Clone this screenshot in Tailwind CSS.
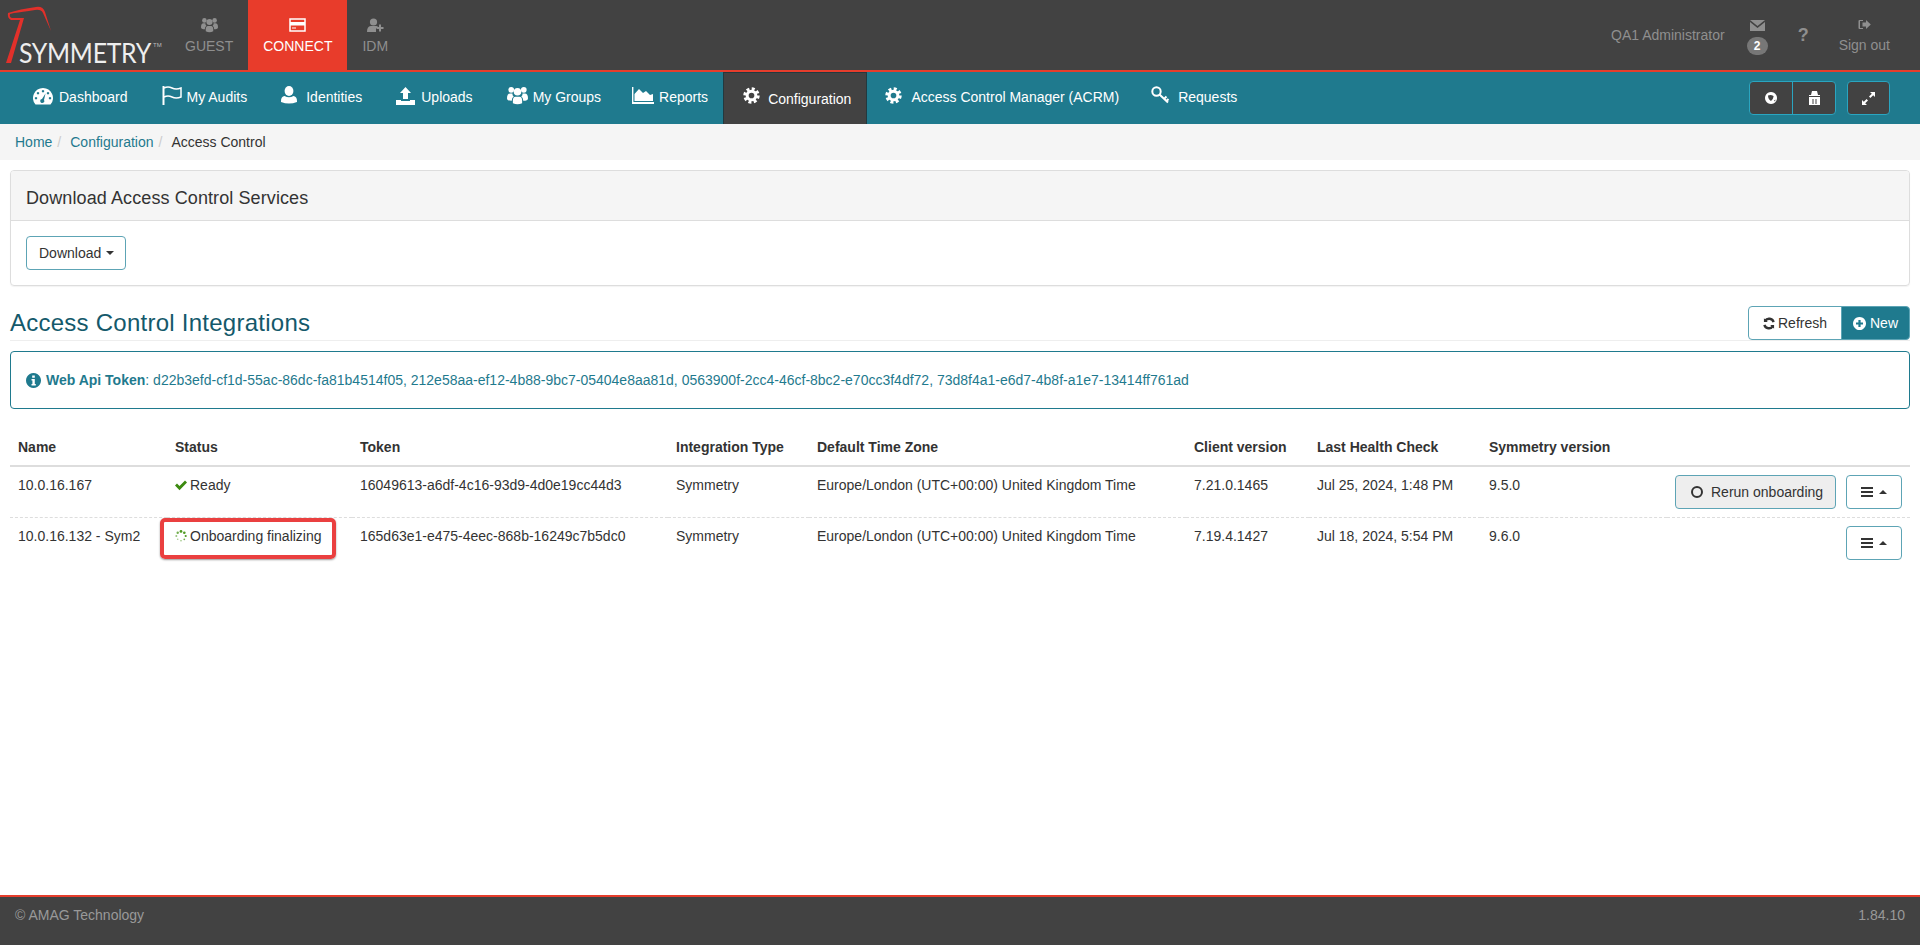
<!DOCTYPE html>
<html lang="en">
<head>
    <meta charset="UTF-8">
    <title>Access Control</title>
    <script src="https://cdn.jsdelivr.net/npm/@tailwindcss/browser@4"></script>
</head>
<body class="bg-white text-[#333] text-[14px] leading-[20px] font-['Liberation_Sans',Arial,sans-serif] h-screen overflow-hidden flex flex-col relative">

    <!-- shared icons -->
    <svg class="hidden">
        <symbol id="i-group" viewBox="0 0 20 18">
            <circle cx="4" cy="3.6" r="2.7"/><circle cx="16" cy="3.6" r="2.7"/><circle cx="10" cy="5.4" r="3.6"/>
            <path d="M0 11.5 Q0 7 3 7 L5.2 7 Q5 9 6.4 10 Q4.6 11 4.6 13.5 L4.6 14 Q0 14 0 11.5Z"/>
            <path d="M20 11.5 Q20 7 17 7 L14.8 7 Q15 9 13.6 10 Q15.4 11 15.4 13.5 L15.4 14 Q20 14 20 11.5Z"/>
            <path d="M5.6 14 Q5.6 10.4 8 10.2 L12 10.2 Q14.4 10.4 14.4 14 L14.4 16.4 Q10 18.4 5.6 16.4Z"/>
        </symbol>
        <symbol id="i-gear" viewBox="0 0 18 18">
            <circle cx="9" cy="9" r="4.6" fill="none" stroke="currentColor" stroke-width="3.2"/>
            <circle cx="9" cy="9" r="7" fill="none" stroke="currentColor" stroke-width="3.4" stroke-dasharray="3.1 2.4"/>
        </symbol>
        <symbol id="i-bars" viewBox="0 0 12 10">
            <rect y="0" width="12" height="2"/><rect y="4" width="12" height="2"/><rect y="8" width="12" height="2"/>
        </symbol>
    </svg>

    <!-- Top bar -->
    <header class="h-[72px] shrink-0 bg-[#424242] border-b-2 border-[#e53d2c] flex justify-between">
        <div class="flex">
            <a class="w-[170px] h-[70px] relative block">
                <svg class="absolute left-0 top-0" width="60" height="70" viewBox="0 0 60 70" fill="#e2302a">
                    <path d="M8 13 Q20 9 36 7 Q43 6 45 12 L51 31 L43 13 Q41 9 35 10 Q22 12 14 13 L10 14 Q9 17 12 18 L24 18 L11 63 L6 63 L20 20 L11 20 Q7 18 8 13Z"/>
                </svg>
                <span class="absolute left-[19px] top-[40px] text-[27px] leading-[26px] origin-left scale-x-[0.92] tracking-[-0.3px] text-[#eeeeee] font-['Lato',sans-serif]">SYMMETRY</span>
                <span class="absolute left-[153px] top-[41px] text-[6px] leading-[8px] text-[#bbb]">TM</span>
            </a>
            <a class="px-[15px] h-[70px] flex flex-col items-center pt-[17px] text-[#8f8f8f]">
                <svg width="17" height="16" fill="currentColor"><use href="#i-group"/></svg>
                <span class="mt-[3px]">GUEST</span>
            </a>
            <a class="px-[15px] h-[70px] flex flex-col items-center pt-[17px] bg-[#e83c2b] text-white">
                <svg width="17" height="16" viewBox="0 0 17 16" fill="none" stroke="currentColor">
                    <rect x="1" y="2" width="15" height="12" stroke-width="1.5"/>
                    <rect x="1" y="5" width="15" height="3.5" fill="currentColor" stroke="none"/>
                    <rect x="3" y="10.5" width="4" height="1" fill="currentColor" stroke="none"/>
                </svg>
                <span class="mt-[3px]">CONNECT</span>
            </a>
            <a class="px-[15px] h-[70px] flex flex-col items-center pt-[17px] text-[#8f8f8f]">
                <svg width="17" height="16" viewBox="0 0 17 16" fill="currentColor">
                    <circle cx="6.5" cy="5" r="3.6"/>
                    <path d="M0 15 Q0 9.5 3.6 9 L9.5 9 Q11.5 9.6 12 11 L9 11 L9 15Z"/>
                    <path d="M12 7.5 H14 V10 H16.5 V12 H14 V14.5 H12 V12 H9.5 V10 H12Z"/>
                </svg>
                <span class="mt-[3px]">IDM</span>
            </a>
        </div>
        <div class="flex items-start text-[#8f8f8f] pr-[30px]">
            <span class="mt-[25px]">QA1 Administrator</span>
            <div class="ml-[22px] mt-[20px] w-[21px] flex flex-col items-center">
                <svg width="15" height="11" viewBox="0 0 15 11" fill="currentColor">
                    <path d="M0 0 H15 L7.5 6Z"/><path d="M0 2 L7.5 8 L15 2 V11 H0Z"/>
                </svg>
                <span class="mt-[6px] w-[21px] h-[18px] rounded-full bg-[#777] text-white text-[12px] leading-[18px] font-bold text-center">2</span>
            </div>
            <span class="ml-[30px] mt-[25px] w-[11px] text-[18px] leading-[20px] font-bold text-center">?</span>
            <div class="ml-[30px] mt-[19px] flex flex-col items-center">
                <svg width="13" height="11" viewBox="0 0 13 11" fill="currentColor">
                    <path d="M5 1 H1.5 Q0.5 1 0.5 2 V9 Q0.5 10 1.5 10 H5 V9 H2 V2 H5Z"/>
                    <path d="M4.5 3.6 H8 V1 L12.8 5.5 L8 10 V7.4 H4.5Z"/>
                </svg>
                <span class="mt-[5px]">Sign out</span>
            </div>
        </div>
    </header>

    <!-- Main nav -->
    <nav class="h-[52px] shrink-0 bg-[#1f7a8e] text-white flex justify-between pl-[14px] pr-[30px]">
        <div class="flex">
            <a class="flex items-center pl-[19px] pr-[15px] pb-[2px]">
                <span class="w-[26px] -mt-[2px]"><svg class="block" width="20" height="17" viewBox="0 0 20 17" fill="currentColor">
                    <path fill-rule="evenodd" d="M10 0 A10 10 0 0 1 17.5 16.5 H2.5 A10 10 0 0 1 10 0Z M10 2 a1.2 1.2 0 1 0 .01 0Z M5 4 a1.2 1.2 0 1 0 .01 0Z M15 4 a1.2 1.2 0 1 0 .01 0Z M3 9 a1.2 1.2 0 1 0 .01 0Z M17 9 a1.2 1.2 0 1 0 .01 0Z M12.5 5.5 L9 11 a2 2 0 1 0 2 1Z"/>
                </svg></span>Dashboard</a>
            <a class="flex items-center pl-[19px] pr-[15px] pb-[2px]">
                <span class="w-[25px] -mt-[3px]"><svg class="block" width="20" height="19" viewBox="0 0 20 19" fill="none" stroke="currentColor" stroke-width="1.5">
                    <path d="M1.5 0 V19" stroke-width="2"/><path d="M2 2 Q6 0 10 2 T19 2 V11 Q14 13 10 11 T2 11"/>
                </svg></span>My Audits</a>
            <a class="flex items-center pl-[19px] pr-[15px] pb-[2px]">
                <span class="w-[25px] -mt-[4px]"><svg class="block" width="16" height="18" viewBox="0 0 16 18" fill="currentColor">
                    <ellipse cx="8" cy="5" rx="4.4" ry="5"/><path d="M0 15 Q0 10.5 3.6 10 Q8 12.4 12.4 10 Q16 10.5 16 15 V16 Q8 19 0 16Z"/>
                </svg></span>Identities</a>
            <a class="flex items-center pl-[19px] pr-[15px] pb-[2px]">
                <span class="w-[25px] -mt-[3px]"><svg class="block" width="19" height="18" viewBox="0 0 19 18" fill="currentColor">
                    <path d="M9.5 0 L15 6 H12 V12 H7 V6 H4Z"/><path d="M0 13 H5 V14 H14 V13 H19 V18 H0Z"/>
                </svg></span>Uploads</a>
            <a class="flex items-center pl-[19px] pr-[15px] pb-[2px]">
                <span class="w-[26px] -mt-[3px]"><svg class="block" width="21" height="19" fill="currentColor"><use href="#i-group"/></svg></span>My Groups</a>
            <a class="flex items-center pl-[16px] pr-[15px] pb-[2px]">
                <span class="w-[27px] -mt-[3px]"><svg class="block" width="22" height="17" viewBox="0 0 22 17" fill="currentColor">
                    <path d="M0 0 H1.4 V15 H22 V17 H0Z"/><path d="M2.5 14 V7 L7 2 L11 6 L14 4 L18 8 L21 7 V14Z"/>
                </svg></span>Reports</a>
            <a class="flex items-center pl-[19px] pr-[15px] bg-[#424242] border-x border-t border-[#22393f]">
                <span class="w-[25px] -mt-[6px]"><svg class="block" width="17" height="17" color="#fff"><use href="#i-gear"/></svg></span>Configuration</a>
            <a class="flex items-center pl-[18px] pr-[15px] pb-[2px]">
                <span class="w-[26px] -mt-[3px]"><svg class="block" width="17" height="17"><use href="#i-gear"/></svg></span>Access Control Manager (ACRM)</a>
            <a class="flex items-center pl-[17px] pr-[15px] pb-[2px]">
                <span class="w-[27px] -mt-[4px]"><svg class="block" width="19" height="19" viewBox="0 0 19 19" fill="none" stroke="currentColor" stroke-width="2">
                    <circle cx="5.5" cy="5.5" r="4.2"/><path d="M8.5 8.5 L17 16.5 M13 13 L15.5 10.5 M15.5 15 L17.5 13"/>
                </svg></span>Requests</a>
        </div>
        <div class="flex items-center gap-[11px]">
            <div class="flex h-[34px] bg-[#424242] border border-[#2aa5c0] rounded-[4px] divide-x divide-[#2aa5c0]">
                <span class="w-[43px] flex items-center justify-center">
                    <svg width="12" height="12" viewBox="0 0 12 12" fill="currentColor"><path fill-rule="evenodd" d="M6 0 a6 6 0 1 0 .01 0Z M9 8.5 L10.5 7.5 L10 9.5Z M3 3.5 Q6 2.5 8.5 4 Q9 6 6 9 Q3 7 3 3.5Z"/></svg>
                </span>
                <span class="w-[42px] flex items-center justify-center">
                    <svg width="11" height="14" viewBox="0 0 11 14" fill="currentColor"><path fill-rule="evenodd" d="M3 0 H8 L9 4 H11 V5 H0 V4 H2Z M0 6 H11 V14 H0Z M3.5 8 H4.5 V13 H3.5Z M6.5 8 H7.5 V13 H6.5Z"/></svg>
                </span>
            </div>
            <span class="w-[43px] h-[34px] bg-[#424242] border border-[#2aa5c0] rounded-[4px] flex items-center justify-center">
                <svg width="13" height="13" viewBox="0 0 13 13" fill="currentColor"><path d="M8 0 H13 V5 L11.2 3.2 L8.4 6 L7 4.6 L9.8 1.8Z"/><path d="M5 13 H0 V8 L1.8 9.8 L4.6 7 L6 8.4 L3.2 11.2Z"/></svg>
            </span>
        </div>
    </nav>

    <!-- Breadcrumb -->
    <div class="h-[36px] shrink-0 bg-[#f5f5f5] flex items-center pl-[15px]">
        <a class="text-[#1f7a8e]">Home</a><span class="text-[#ccc] pl-[5px] pr-[9px]">/</span>
        <a class="text-[#1f7a8e]">Configuration</a><span class="text-[#ccc] pl-[5px] pr-[9px]">/</span>
        <span>Access Control</span>
    </div>

    <main class="flex-1 px-[10px]">
        <!-- Download panel -->
        <section class="mt-[10px] border border-[#ddd] rounded-[4px] shadow-[0_1px_1px_rgba(0,0,0,0.05)]">
            <h3 class="h-[50px] bg-[#f5f5f5] border-b border-[#ddd] rounded-t-[3px] flex items-center pl-[15px] pt-[5px] text-[18px] tracking-[0.1px]">Download Access Control Services</h3>
            <div class="p-[15px]">
                <button class="h-[34px] pl-[12px] pr-[11px] border border-[#5da4b5] rounded-[4px] bg-white flex items-center">Download<span class="ml-[5px] border-x-[4px] border-x-transparent border-t-[4px] border-t-[#333]"></span></button>
            </div>
        </section>

        <!-- Heading -->
        <div class="mt-[20px] flex justify-between items-end border-b border-[#eee]">
            <h2 class="text-[24px] leading-[26px] tracking-[0.25px] text-[#14596b] pb-[4px]">Access Control Integrations</h2>
            <div class="flex h-[34px]">
                <button class="w-[94px] border border-[#5da4b5] rounded-l-[4px] bg-white flex items-center justify-center gap-[3px]">
                    <svg width="12" height="13" viewBox="0 0 13 13" fill="none" stroke="#333" stroke-width="2.6"><path d="M11.5 5 A5.2 5.2 0 0 0 2.2 3.6"/><path d="M1.5 8 A5.2 5.2 0 0 0 10.8 9.4"/><path d="M1 0.8 V5 H5.2Z M12 12.2 V8 H7.8Z" fill="#333" stroke="none"/></svg>
                    Refresh</button>
                <button class="w-[69px] border border-[#5da4b5] rounded-r-[4px] -ml-px bg-[#1f7a8e] text-white flex items-center justify-center gap-[4px]">
                    <svg width="13" height="13" viewBox="0 0 13 13" fill="currentColor"><path fill-rule="evenodd" d="M6.5 0 a6.5 6.5 0 1 0 .01 0Z M5.4 3 H7.6 V5.4 H10 V7.6 H7.6 V10 H5.4 V7.6 H3 V5.4 H5.4Z"/></svg>
                    New</button>
            </div>
        </div>

        <!-- Tokens -->
        <div class="mt-[10px] h-[58px] border border-[#1f7a8e] rounded-[4px] flex items-center pl-[15px] text-[#1f7a8e]">
            <svg class="mr-[5px]" width="15" height="15" viewBox="0 0 15 15" fill="currentColor"><path fill-rule="evenodd" d="M7.5 0 a7.5 7.5 0 1 0 .01 0Z M6.2 2.4 H8.8 V4.8 H6.2Z M5.5 6 H8.8 V11 H9.8 V12.5 H5.5 V11 H6.4 V7.5 H5.5Z"/></svg>
            <p><b>Web Api Token</b>: d22b3efd-cf1d-55ac-86dc-fa81b4514f05, 212e58aa-ef12-4b88-9bc7-05404e8aa81d, 0563900f-2cc4-46cf-8bc2-e70cc3f4df72, 73d8f4a1-e6d7-4b8f-a1e7-13414ff761ad</p>
        </div>

        <!-- Integrations table -->
        <table class="mt-[20px] w-full table-fixed border-separate border-spacing-0">
            <colgroup>
                <col class="w-[157px]"><col class="w-[185px]"><col class="w-[316px]"><col class="w-[141px]"><col class="w-[377px]"><col class="w-[123px]"><col class="w-[172px]"><col class="w-[186px]"><col>
            </colgroup>
            <thead>
                <tr class="text-left">
                    <th class="p-[8px] border-b-2 border-[#ddd]">Name</th>
                    <th class="p-[8px] border-b-2 border-[#ddd]">Status</th>
                    <th class="p-[8px] border-b-2 border-[#ddd]">Token</th>
                    <th class="p-[8px] border-b-2 border-[#ddd] whitespace-nowrap">Integration Type</th>
                    <th class="p-[8px] border-b-2 border-[#ddd]">Default Time Zone</th>
                    <th class="p-[8px] border-b-2 border-[#ddd] whitespace-nowrap">Client version</th>
                    <th class="p-[8px] border-b-2 border-[#ddd] whitespace-nowrap">Last Health Check</th>
                    <th class="p-[8px] border-b-2 border-[#ddd] whitespace-nowrap">Symmetry version</th>
                    <th class="p-[8px] border-b-2 border-[#ddd]"></th>
                </tr>
            </thead>
            <tbody class="align-top">
                <tr>
                    <td class="p-[8px] border-b border-dashed border-[#ddd]">10.0.16.167</td>
                    <td class="p-[8px] border-b border-dashed border-[#ddd]"><span class="flex items-center gap-[3px]">
                        <svg width="12" height="11" viewBox="0 0 12 10" fill="#3c8a10"><path d="M0 5 L2 3 L4.5 5.6 L10 0 L12 2 L4.5 9.8Z"/></svg>Ready</span></td>
                    <td class="p-[8px] border-b border-dashed border-[#ddd]">16049613-a6df-4c16-93d9-4d0e19cc44d3</td>
                    <td class="p-[8px] border-b border-dashed border-[#ddd]">Symmetry</td>
                    <td class="p-[8px] border-b border-dashed border-[#ddd]">Europe/London (UTC+00:00) United Kingdom Time</td>
                    <td class="p-[8px] border-b border-dashed border-[#ddd]">7.21.0.1465</td>
                    <td class="p-[8px] border-b border-dashed border-[#ddd]">Jul 25, 2024, 1:48 PM</td>
                    <td class="p-[8px] border-b border-dashed border-[#ddd]">9.5.0</td>
                    <td class="p-[8px] border-b border-dashed border-[#ddd]"><div class="flex justify-end gap-[10px]">
                        <button class="w-[161px] shrink-0 h-[34px] bg-[#eee] border border-[#5da4b5] rounded-[4px] flex items-center pl-[15px] gap-[8px] whitespace-nowrap">
                            <span class="w-[12px] h-[12px] rounded-full border-2 border-[#333]"></span>Rerun onboarding</button>
                        <button class="w-[56px] shrink-0 h-[34px] bg-white border border-[#5da4b5] rounded-[4px] flex items-center justify-center gap-[6px]">
                            <svg width="12" height="10" fill="#333"><use href="#i-bars"/></svg>
                            <span class="border-x-[4px] border-x-transparent border-b-[4px] border-b-[#333]"></span></button>
                    </div></td>
                </tr>
                <tr>
                    <td class="p-[8px]">10.0.16.132 - Sym2</td>
                    <td class="p-[8px]"><span class="flex items-center gap-[3px] whitespace-nowrap">
                        <svg width="12" height="12" viewBox="0 0 12 12" fill="#4f9a22">
                            <circle cx="6" cy="1.4" r="1.4"/><circle cx="9.3" cy="2.7" r="1.3"/><circle cx="10.7" cy="6" r="1.1"/><circle cx="9.3" cy="9.3" r="0.9" opacity=".8"/>
                            <circle cx="6" cy="10.7" r="0.8" opacity=".6"/><circle cx="2.7" cy="9.3" r="0.8" opacity=".5"/><circle cx="1.3" cy="6" r="1" opacity=".6"/><circle cx="2.7" cy="2.7" r="1.2" opacity=".8"/>
                        </svg>Onboarding finalizing</span></td>
                    <td class="p-[8px]">165d63e1-e475-4eec-868b-16249c7b5dc0</td>
                    <td class="p-[8px]">Symmetry</td>
                    <td class="p-[8px]">Europe/London (UTC+00:00) United Kingdom Time</td>
                    <td class="p-[8px]">7.19.4.1427</td>
                    <td class="p-[8px]">Jul 18, 2024, 5:54 PM</td>
                    <td class="p-[8px]">9.6.0</td>
                    <td class="p-[8px]"><div class="flex justify-end">
                        <button class="w-[56px] shrink-0 h-[34px] bg-white border border-[#5da4b5] rounded-[4px] flex items-center justify-center gap-[6px]">
                            <svg width="12" height="10" fill="#333"><use href="#i-bars"/></svg>
                            <span class="border-x-[4px] border-x-transparent border-b-[4px] border-b-[#333]"></span></button>
                    </div></td>
                </tr>
            </tbody>
        </table>
    </main>

    <!-- Callout drawn on the screenshot -->
    <div class="absolute left-[160px] top-[518px] w-[176px] h-[41px] border-[4px] border-[#ea4040] rounded-[5px] shadow-[0_1px_2px_rgba(0,0,0,0.4)]"></div>

    <footer class="h-[50px] shrink-0 bg-[#424242] border-t-2 border-[#e53d2c] flex justify-between items-start pt-[8px] px-[15px] text-[#999]">
        <span>© AMAG Technology</span>
        <span>1.84.10</span>
    </footer>
</body>
</html>
